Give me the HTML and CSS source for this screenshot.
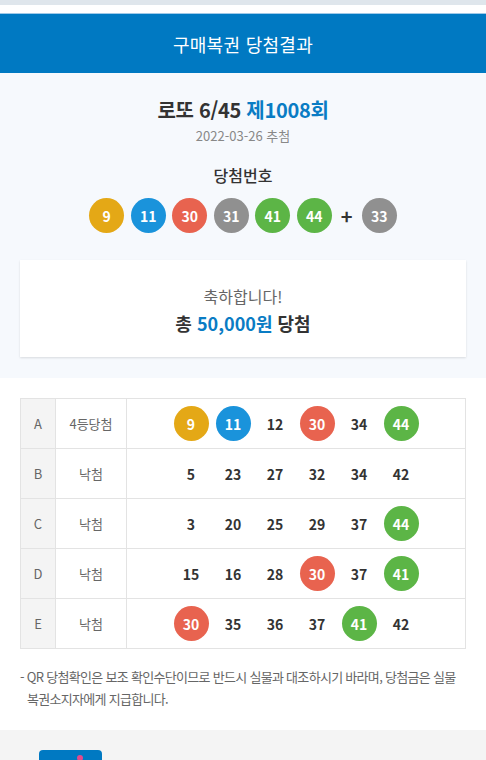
FILE: index.html
```html
<!DOCTYPE html>
<html lang="ko">
<head>
<meta charset="utf-8">
<link rel="stylesheet" href="styles.css">
</head>
<body>
<div class="topbar"></div>
<div class="gap"></div>
<header class="header">구매복권 당첨결과</header>
<section class="summary">
  <h1 class="title">로또 6/45 <span class="blue">제1008회</span></h1>
  <p class="date">2022-03-26 추첨</p>
  <h2 class="sub">당첨번호</h2>
  <div class="balls">
    <span class="ball y">9</span>
    <span class="ball b">11</span>
    <span class="ball r">30</span>
    <span class="ball g">31</span>
    <span class="ball gr">41</span>
    <span class="ball gr">44</span>
    <span class="plus">+</span>
    <span class="ball g">33</span>
  </div>
  <div class="card">
    <p class="congrats">축하합니다!</p>
    <p class="total">총 <span class="blue">50,000원</span> 당첨</p>
  </div>
</section>
<section class="results">
  <div class="table">
    <div class="row">
      <div class="c1">A</div><div class="c2">4등당첨</div>
      <div class="c3"><span class="ball y">9</span><span class="ball b">11</span><span class="num">12</span><span class="ball r">30</span><span class="num">34</span><span class="ball gr">44</span></div>
    </div>
    <div class="row">
      <div class="c1">B</div><div class="c2">낙첨</div>
      <div class="c3"><span class="num">5</span><span class="num">23</span><span class="num">27</span><span class="num">32</span><span class="num">34</span><span class="num">42</span></div>
    </div>
    <div class="row">
      <div class="c1">C</div><div class="c2">낙첨</div>
      <div class="c3"><span class="num">3</span><span class="num">20</span><span class="num">25</span><span class="num">29</span><span class="num">37</span><span class="ball gr">44</span></div>
    </div>
    <div class="row">
      <div class="c1">D</div><div class="c2">낙첨</div>
      <div class="c3"><span class="num">15</span><span class="num">16</span><span class="num">28</span><span class="ball r">30</span><span class="num">37</span><span class="ball gr">41</span></div>
    </div>
    <div class="row">
      <div class="c1">E</div><div class="c2">낙첨</div>
      <div class="c3"><span class="ball r">30</span><span class="num">35</span><span class="num">36</span><span class="num">37</span><span class="ball gr">41</span><span class="num">42</span></div>
    </div>
  </div>
  <p class="note">- QR 당첨확인은 보조 확인수단이므로 반드시 실물과 대조하시기 바라며, 당첨금은 실물 복권소지자에게 지급합니다.</p>
</section>
<footer class="footer">
  <div class="logo"><span class="dot"></span></div>
</footer>
</body>
</html>
```
FILE: styles.css
```css
* { box-sizing: border-box; }
html, body {
  margin: 0;
  padding: 0;
  font-family: "Noto Sans CJK KR", "Noto Sans", sans-serif;
  color: #333;
  background: #fff;
  overflow: hidden;
}
p, h1, h2 { margin: 0; }
.blue { color: #0a7cc4; }
.topbar { height: 5px; background: #dfe6ec; }
.gap { height: 8px; background: #fff; }
.header {
  height: 60px;
  background: #0079c2;
  border-top: 1px solid #9fc9e8;
  color: #fff;
  font-size: 18px;
  display: flex;
  align-items: center;
  justify-content: center;
  letter-spacing: 0.3px;
}
.summary {
  background: #f6f9fd;
  padding: 22px 20px 21px;
  display: flex;
  flex-direction: column;
  align-items: center;
}
.title {
  font-size: 20px;
  font-weight: 700;
  line-height: 30px;
  letter-spacing: -0.3px;
}
.date {
  font-size: 13px;
  color: #888;
  line-height: 20px;
  margin-top: 1px;
}
.sub {
  font-size: 16px;
  font-weight: 500;
  line-height: 24px;
  margin-top: 17px;
}
.balls {
  display: flex;
  align-items: center;
  gap: 6.5px;
  margin-top: 11px;
}
.ball {
  width: 35px;
  height: 35px;
  border-radius: 50%;
  color: #fff;
  font-weight: 700;
  font-size: 14px;
  display: flex;
  align-items: center;
  justify-content: center;
  flex: none;
}
.ball.y { background: #e4a816; }
.ball.b { background: #1a93db; }
.ball.r { background: #e8634f; }
.ball.g { background: #909090; }
.ball.gr { background: #5cb546; }
.plus {
  width: 17px;
  text-align: center;
  font-size: 20px;
  font-weight: 700;
  color: #333;
}
.card {
  align-self: stretch;
  margin-top: 27px;
  height: 97px;
  background: #fff;
  box-shadow: 0 1px 2px rgba(0,0,0,0.12);
  display: flex;
  flex-direction: column;
  align-items: center;
  justify-content: center;
  padding-top: 2px;
}
.congrats {
  font-size: 16px;
  color: #666;
  line-height: 26px;
}
.total {
  font-size: 18px;
  font-weight: 700;
  line-height: 28px;
}
.results {
  background: #fff;
  padding: 20px 20px 0;
  height: 352px;
}
.table {
  border: 1px solid #e3e3e3;
  border-bottom: none;
}
.row {
  display: flex;
  height: 50px;
  border-bottom: 1px solid #e3e3e3;
}
.c1 {
  width: 35px;
  background: #f4f4f4;
  border-right: 1px solid #e3e3e3;
  display: flex;
  align-items: center;
  justify-content: center;
  font-size: 13px;
  color: #666;
}
.c2 {
  width: 71px;
  border-right: 1px solid #e3e3e3;
  display: flex;
  align-items: center;
  justify-content: center;
  font-size: 13px;
  color: #666;
}
.c3 {
  flex: 1;
  display: flex;
  align-items: center;
  justify-content: center;
  gap: 7px;
}
.num {
  width: 35px;
  text-align: center;
  font-size: 14px;
  font-weight: 700;
  color: #333;
}
.note {
  margin-top: 17px;
  font-size: 13px;
  line-height: 22px;
  color: #666;
  padding-left: 7px;
  text-indent: -7px;
  letter-spacing: -0.7px;
  word-break: keep-all;
}
.footer {
  background: #f4f4f4;
  height: 40px;
  padding: 20px 0 0 39px;
}
.logo {
  position: relative;
  width: 63px;
  height: 20px;
  background: #0079c2;
  border-radius: 4px 4px 0 0;
}
.dot {
  position: absolute;
  left: 38px;
  top: 5px;
  width: 6px;
  height: 6px;
  border-radius: 50%;
  background: #e44a8c;
}
```
